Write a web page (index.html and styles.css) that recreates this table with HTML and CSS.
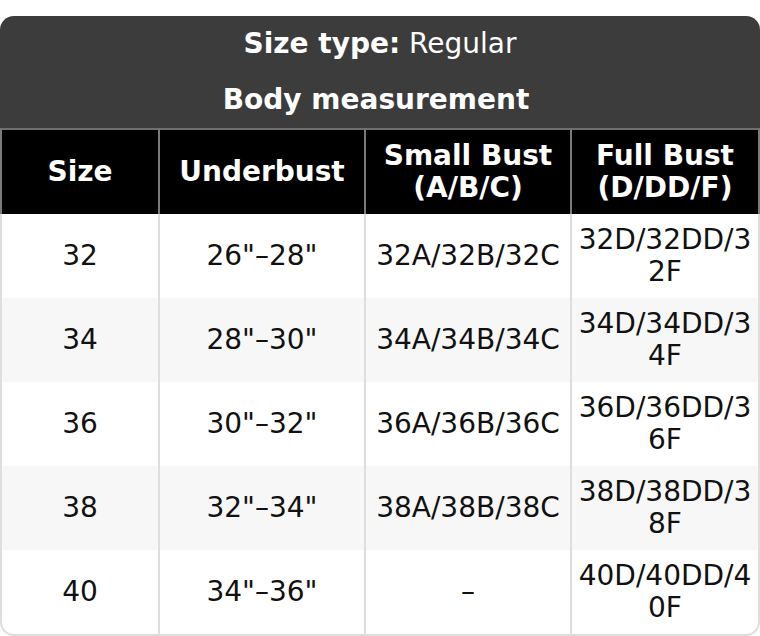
FILE: index.html
```html
<!DOCTYPE html>
<html lang="en">
<head>
<meta charset="utf-8">
<title>Size chart</title>
<link rel="stylesheet" href="styles.css">
</head>
<body>
<div class="chart">
  <div class="caption">
    <div class="caption-row"><strong>Size type:</strong> Regular</div>
    <div class="caption-row caption-title"><strong>Body measurement</strong></div>
  </div>
  <table class="sizes">
    <thead>
      <tr>
        <th class="c1">Size</th>
        <th class="c2">Underbust</th>
        <th class="c3">Small Bust (A/B/C)</th>
        <th class="c4">Full Bust (D/DD/F)</th>
      </tr>
    </thead>
    <tbody>
      <tr><td>32</td><td>26"–28"</td><td>32A/32B/32C</td><td class="wrap">32D/32DD/32F</td></tr>
      <tr><td>34</td><td>28"–30"</td><td>34A/34B/34C</td><td class="wrap">34D/34DD/34F</td></tr>
      <tr><td>36</td><td>30"–32"</td><td>36A/36B/36C</td><td class="wrap">36D/36DD/36F</td></tr>
      <tr><td>38</td><td>32"–34"</td><td>38A/38B/38C</td><td class="wrap">38D/38DD/38F</td></tr>
      <tr><td>40</td><td>34"–36"</td><td>–</td><td class="wrap">40D/40DD/40F</td></tr>
    </tbody>
  </table>
</div>
</body>
</html>
```

FILE: styles.css
```css
html, body {
  margin: 0;
  padding: 0;
  background: #ffffff;
}

body {
  padding-top: 16px;
  font-family: "DejaVu Sans", Verdana, sans-serif;
  font-size: 28px;
  line-height: 32px;
  color: #111111;
}

.chart {
  width: 760px;
}

.caption {
  background: #3c3c3c;
  color: #ffffff;
  border-radius: 14px 14px 0 0;
  text-align: center;
}

.caption-row {
  padding: 12px 8px;
}

.caption-title {
  padding-right: 16px;
}

.caption-row strong {
  font-weight: bold;
}

.sizes {
  width: 760px;
  table-layout: fixed;
  border-collapse: separate;
  border-spacing: 0;
}

.sizes th,
.sizes td {
  box-sizing: border-box;
  padding: 10px 4px;
  text-align: center;
  vertical-align: middle;
  border-right: 2px solid #dddddd;
}

.sizes th:first-child,
.sizes td:first-child {
  border-left: 2px solid #dddddd;
}

.sizes th {
  background: #000000;
  color: #ffffff;
  font-weight: bold;
  border-top: 2px solid #6e6e6e;
  border-right-color: #7a7a7a;
}

.sizes th:first-child {
  border-left-color: #7a7a7a;
}

.sizes .c1 { width: 160px; }
.sizes .c2 { width: 206px; }
.sizes .c3 { width: 206px; }
.sizes .c4 { width: 188px; }

.sizes td {
  background: #ffffff;
}

.sizes tbody tr:nth-child(even) td {
  background: #f7f7f7;
}

.sizes .wrap {
  word-break: break-all;
}

.sizes tbody tr:last-child td {
  border-bottom: 2px solid #dddddd;
}

.sizes tbody tr:last-child td:first-child {
  border-bottom-left-radius: 14px;
}

.sizes tbody tr:last-child td:last-child {
  border-bottom-right-radius: 14px;
}
```
